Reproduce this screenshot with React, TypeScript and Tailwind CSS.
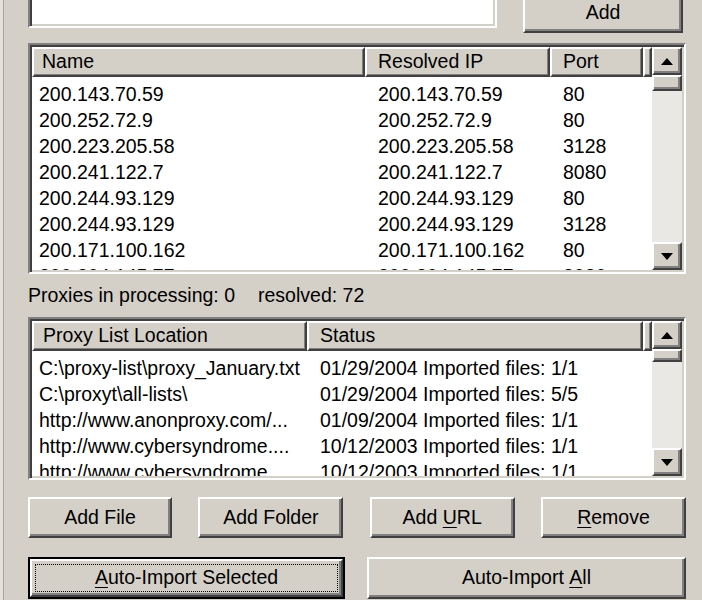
import type { ReactNode } from 'react';

const proxies = [
  ['200.143.70.59', '200.143.70.59', '80'],
  ['200.252.72.9', '200.252.72.9', '80'],
  ['200.223.205.58', '200.223.205.58', '3128'],
  ['200.241.122.7', '200.241.122.7', '8080'],
  ['200.244.93.129', '200.244.93.129', '80'],
  ['200.244.93.129', '200.244.93.129', '3128'],
  ['200.171.100.162', '200.171.100.162', '80'],
  ['200.204.145.77', '200.204.145.77', '8080'],
];

const lists = [
  ['C:\\proxy-list\\proxy_January.txt', '01/29/2004 Imported files: 1/1'],
  ['C:\\proxyt\\all-lists\\', '01/29/2004 Imported files: 5/5'],
  ['http://www.anonproxy.com/...', '01/09/2004 Imported files: 1/1'],
  ['http://www.cybersyndrome....', '10/12/2003 Imported files: 1/1'],
  ['http://www.cybersyndrome....', '10/12/2003 Imported files: 1/1'],
];

const raised =
  'border-2 border-t-white border-l-white border-b-[#404040] border-r-[#404040] shadow-[inset_-2px_-2px_0_#808080] bg-[#d4d0c8]';
const sunken =
  'border-2 border-t-[#808080] border-l-[#808080] border-b-white border-r-white shadow-[inset_2px_2px_0_#404040,inset_-2px_-2px_0_#d4d0c8] p-[2px] bg-white';
const headCell =
  'h-full border-2 border-t-white border-l-white border-b-[#404040] border-r-[#404040] shadow-[inset_-1px_-1px_0_#808080] bg-[#d4d0c8] flex items-center whitespace-nowrap overflow-hidden';

function Arrow({ down }: { down?: boolean }) {
  return (
    <svg width="12" height="7" viewBox="0 0 12 7">
      <polygon points={down ? '0,0 12,0 6,7' : '6,0 12,7 0,7'} fill="#000" />
    </svg>
  );
}

function Scrollbar({ thumb }: { thumb: number }) {
  return (
    <div className="w-[30px] h-full flex flex-col shrink-0">
      <div className={`${raised} h-[28px] flex items-center justify-center`}>
        <Arrow />
      </div>
      <div className={`${raised} shrink-0`} style={{ height: thumb }} />
      <div className="flex-1 bg-[#eae8e4]" />
      <div className={`${raised} h-[28px] flex items-center justify-center`}>
        <Arrow down />
      </div>
    </div>
  );
}

function Button({ children, w }: { children: ReactNode; w: string }) {
  return <div className={`${raised} ${w} h-full flex items-center justify-center`}>{children}</div>;
}

export default function App() {
  return (
    <div className="w-[702px] h-[600px] overflow-hidden bg-[#d4d0c8] pl-[28px] pr-[16px] text-[19.5px] text-black font-['Liberation_Sans',Arial,sans-serif] shadow-[inset_3px_0_0_#e4e1db,inset_4px_0_0_#aaa69e]">
      {/* url entry + add */}
      <div className="-mt-[8px] flex items-start">
        <div className={`${sunken} w-[469px] h-[36px]`} />
        <div className={`${raised} ml-auto mr-[3px] w-[160px] h-[41px] flex items-center justify-center`}>Add</div>
      </div>

      {/* resolved proxies */}
      <div className={`${sunken} mt-[10px] h-[231px] flex`}>
        <div className="flex-1 min-w-0 flex flex-col overflow-hidden">
          <div className="h-[30px] flex shrink-0">
            <div className={`${headCell} flex-1 pl-[8px]`}>Name</div>
            <div className={`${headCell} w-[185px] pl-[11px]`}>Resolved IP</div>
            <div className={`${headCell} w-[93px] pl-[11px]`}>Port</div>
            <div className={`${headCell} w-[9px]`} />
          </div>
          <div className="pt-[4px]">
            {proxies.map((p, i) => (
              <div key={i} className="flex h-[26px] leading-[26px] whitespace-nowrap">
                <div className="flex-1 pl-[7px] overflow-hidden">{p[0]}</div>
                <div className="w-[185px] pl-[13px] overflow-hidden">{p[1]}</div>
                <div className="w-[102px] pl-[13px] overflow-hidden">{p[2]}</div>
              </div>
            ))}
          </div>
        </div>
        <Scrollbar thumb={16} />
      </div>

      <div className="mt-[10px] h-[22px] leading-[22px] whitespace-nowrap">
        Proxies in processing: 0<span className="ml-[23px]">resolved: 72</span>
      </div>

      {/* proxy list sources */}
      <div className={`${sunken} mt-[11px] h-[163px] flex`}>
        <div className="flex-1 min-w-0 flex flex-col overflow-hidden">
          <div className="h-[30px] flex shrink-0">
            <div className={`${headCell} w-[275px] pl-[9px]`}>Proxy List Location</div>
            <div className={`${headCell} flex-1 pl-[11px]`}>Status</div>
            <div className={`${headCell} w-[9px]`} />
          </div>
          <div className="pt-[4px]">
            {lists.map((l, i) => (
              <div key={i} className="flex h-[26px] leading-[26px] whitespace-nowrap">
                <div className="w-[275px] pl-[7px] overflow-hidden">{l[0]}</div>
                <div className="flex-1 pl-[13px] overflow-hidden">{l[1]}</div>
              </div>
            ))}
          </div>
        </div>
        <Scrollbar thumb={13} />
      </div>

      <div className="mt-[17px] h-[41px] flex justify-between">
        <Button w="w-[144px]">Add File</Button>
        <Button w="w-[145px]">Add Folder</Button>
        <Button w="w-[145px]">
          Add&nbsp;<u className="underline-offset-[3px]">U</u>RL
        </Button>
        <Button w="w-[145px]">
          <u className="underline-offset-[3px]">R</u>emove
        </Button>
      </div>

      <div className="mt-[19px] h-[42px] flex justify-between">
        <div className="w-[317px] h-full border-2 border-black">
          <div className={`${raised} relative h-full flex items-center justify-center`}>
            <div className="absolute inset-[3px] border border-dotted border-black" />
            <span>
              <u className="underline-offset-[3px]">A</u>uto-Import Selected
            </span>
          </div>
        </div>
        <Button w="w-[319px]">
          Auto-Import&nbsp;<u className="underline-offset-[3px]">A</u>ll
        </Button>
      </div>
    </div>
  );
}
